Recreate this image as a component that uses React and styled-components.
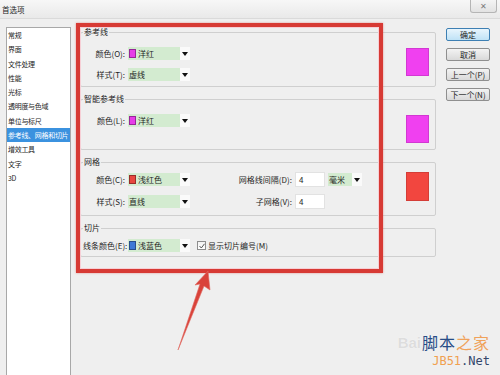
import React from "react";
import styled, { createGlobalStyle } from "styled-components";

const Global = createGlobalStyle`
  body {
    margin: 0;
    font-family: "Noto Sans CJK SC", "Liberation Sans", sans-serif;
    font-size: 8px;
    color: #1e1e1e;
  }
`;

const Window = styled.div`
  position: relative;
  width: 500px;
  height: 375px;
  overflow: hidden;
  background: #efefef;
`;

const TitleBar = styled.div`
  height: 18px;
  display: flex;
  align-items: center;
  padding-left: 2px;
  background: linear-gradient(#f7f7f7, #e9e9e9);
  border-bottom: 1px solid #dadada;
  font-size: 7.5px;
`;

const CloseBtn = styled.div`
  margin-left: auto;
  margin-right: 3px;
  align-self: flex-start;
  width: 25px;
  height: 12px;
  border: 1px solid #b5b5b5;
  border-top: none;
  border-radius: 0 0 3px 3px;
  background: linear-gradient(#f4f4f4, #e2e2e2);
  display: flex;
  align-items: center;
  justify-content: center;
  color: #7a7a7a;
  font-size: 8px;
  line-height: 1;
`;

const Body = styled.div`
  display: flex;
  height: 356px;
  padding: 7px 0 0 6px;
`;

const NavList = styled.ul`
  list-style: none;
  margin: 1px 9px 0 0;
  padding: 0;
  width: 63px;
  background: #fff;
  border: 1px solid #a8a8a8;
  border-bottom: none;
`;

const NavItem = styled.li`
  height: 14.3px;
  line-height: 14.3px;
  padding-left: 1px;
  font-size: 7px;
  letter-spacing: -0.3px;
  white-space: nowrap;
  overflow: hidden;
  background: ${(p) => (p.$active ? "#3b92df" : "transparent")};
  color: ${(p) => (p.$active ? "#fff" : "#1e1e1e")};
`;

const Main = styled.div`
  width: 356px;
  display: flex;
  flex-direction: column;
  gap: 6px;
`;

const Group = styled.fieldset`
  margin: 0;
  padding: ${(p) => p.$pt}px 6px ${(p) => p.$pb}px 2px;
  border: 1px solid #cfcfcf;
  border-radius: 2px;
  min-width: 0;
`;

const Legend = styled.legend`
  padding: 0 1px;
  margin: 0;
  line-height: 12px;
  font-size: 8px;
`;

const GroupRow = styled.div`
  display: flex;
  align-items: flex-start;
`;

const Fields = styled.div`
  display: grid;
  grid-template-columns: ${(p) => p.$cols};
  column-gap: 3px;
  row-gap: ${(p) => p.$gap}px;
  align-items: center;
`;

const Label = styled.span`
  text-align: right;
  white-space: nowrap;
  line-height: 13px;
`;

const ComboBox = styled.div`
  display: flex;
  height: 13px;
`;

const ComboField = styled.div`
  flex: 1;
  display: flex;
  align-items: center;
  gap: 2px;
  padding-left: 1px;
  background: #d3ebd0;
  white-space: nowrap;
`;

const ComboArrow = styled.div`
  width: 10px;
  background: #fafafa;
  display: flex;
  align-items: center;
  justify-content: center;
`;

const Chip = styled.span`
  width: 7px;
  height: 9px;
  background: ${(p) => p.$color};
  border: 1px solid rgba(0, 0, 0, 0.35);
  box-sizing: border-box;
`;

const NumInput = styled.div`
  height: 15px;
  background: #fff;
  border: 1px solid #e2e2e2;
  box-sizing: border-box;
  padding-left: 3px;
  line-height: 13px;
`;

const Swatch = styled.div`
  margin-left: auto;
  margin-top: ${(p) => p.$mt}px;
  width: 23px;
  height: ${(p) => p.$h}px;
  background: ${(p) => p.$color};
  border: 1px solid rgba(0, 0, 0, 0.12);
  box-sizing: border-box;
`;

const Check = styled.label`
  display: flex;
  align-items: center;
  gap: 2px;
  margin-left: 4px;
  white-space: nowrap;
`;

const CheckBox = styled.span`
  width: 7px;
  height: 7px;
  border: 1px solid #8d8d8d;
  background: linear-gradient(#f2f2f2, #fff);
  display: flex;
  align-items: center;
  justify-content: center;
`;

const Buttons = styled.div`
  width: 44px;
  margin: 2px 0 0 10px;
  display: flex;
  flex-direction: column;
  gap: 7px;
`;

const Button = styled.div`
  height: 13px;
  box-sizing: border-box;
  border: 1px solid ${(p) => (p.$primary ? "#3d7fb3" : "#8f8f8f")};
  border-radius: 2px;
  background: ${(p) =>
    p.$primary
      ? "linear-gradient(#e8f5fd, #bfe2f6)"
      : "linear-gradient(#f3f3f3, #d9d9d9)"};
  display: flex;
  align-items: center;
  justify-content: center;
  line-height: 1;
`;

const Highlight = styled.div`
  position: absolute;
  left: 76px;
  top: 23px;
  width: 307px;
  height: 250px;
  box-sizing: border-box;
  border: 4px solid #d73a34;
  box-shadow: 0 0 2px rgba(215, 58, 52, 0.5), inset 0 0 0 1px #f6cfd6;
  pointer-events: none;
`;

const Overlay = styled.svg`
  position: absolute;
  left: 0;
  top: 0;
  pointer-events: none;
`;

const Watermark = styled.div`
  position: absolute;
  right: 10px;
  bottom: 8px;
  display: flex;
  align-items: flex-start;
  gap: 1px;
`;

const Bai = styled.div`
  font-family: "Liberation Sans", sans-serif;
  font-size: 15px;
  line-height: 17px;
  font-weight: bold;
  color: #dddddd;
  text-shadow: 0 0 1px #fff;
`;

const Brand = styled.div`
  display: flex;
  flex-direction: column;
  align-items: flex-end;
  gap: 4px;
`;

const BrandCn = styled.div`
  font-size: 16px;
  line-height: 17px;
  letter-spacing: 1px;
`;

const BrandEn = styled.div`
  font-family: "DejaVu Sans Mono", monospace;
  font-size: 12px;
  line-height: 12px;
`;

const Tint = styled.span`
  color: ${(p) => p.$c};
`;

const Arrow = () => (
  <svg width="6" height="4" viewBox="0 0 6 4">
    <path d="M0 0h6L3 4z" fill="#111" />
  </svg>
);

function Combo({ width, chip, text }) {
  return (
    <ComboBox style={{ width }}>
      <ComboField>
        {chip && <Chip $color={chip} />}
        {text}
      </ComboField>
      <ComboArrow>
        <Arrow />
      </ComboArrow>
    </ComboBox>
  );
}

const navItems = [
  "常规",
  "界面",
  "文件处理",
  "性能",
  "光标",
  "透明度与色域",
  "单位与标尺",
  "参考线、网格和切片",
  "增效工具",
  "文字",
  "3D",
];

export default function App() {
  return (
    <Window>
      <Global />
      <TitleBar>
        首选项
        <CloseBtn>✕</CloseBtn>
      </TitleBar>
      <Body>
        <NavList>
          {navItems.map((n, i) => (
            <NavItem key={n} $active={i === 7}>
              {n}
            </NavItem>
          ))}
        </NavList>

        <Main>
          <Group $pt={9} $pb={5}>
            <Legend>参考线</Legend>
            <GroupRow>
              <Fields $cols="42px 62px" $gap={8}>
                <Label>颜色(O):</Label>
                <Combo width={62} chip="#e63de8" text="洋红" />
                <Label>样式(T):</Label>
                <Combo width={62} text="虚线" />
              </Fields>
              <Swatch $color="#f040f0" $h={28} $mt={1} />
            </GroupRow>
          </Group>

          <Group $pt={9} $pb={6}>
            <Legend>智能参考线</Legend>
            <GroupRow>
              <Fields $cols="42px 62px" $gap={8}>
                <Label>颜色(L):</Label>
                <Combo width={62} chip="#e63de8" text="洋红" />
              </Fields>
              <Swatch $color="#f040f0" $h={28} $mt={1} />
            </GroupRow>
          </Group>

          <Group $pt={4} $pb={6}>
            <Legend>网格</Legend>
            <GroupRow>
              <Fields $cols="42px 62px 99px 30px 34px" $gap={7}>
                <Label>颜色(C):</Label>
                <Combo width={62} chip="#e8463f" text="浅红色" />
                <Label>网格线间隔(D):</Label>
                <NumInput>4</NumInput>
                <Combo width={34} text="毫米" />
                <Label>样式(S):</Label>
                <Combo width={62} text="直线" />
                <Label>子网格(V):</Label>
                <NumInput>4</NumInput>
                <span />
              </Fields>
              <Swatch $color="#f2463f" $h={29} $mt={0} />
            </GroupRow>
          </Group>

          <Group $pt={5} $pb={4}>
            <Legend>切片</Legend>
            <GroupRow>
              <Fields $cols="42px 62px auto" $gap={0}>
                <Label>线条颜色(E):</Label>
                <Combo width={62} chip="#3e78d6" text="浅蓝色" />
                <Check>
                  <CheckBox>
                    <svg width="6" height="6" viewBox="0 0 6 6">
                      <path d="M0.5 3l1.8 2L5.5 0.8" stroke="#555" strokeWidth="1" fill="none" />
                    </svg>
                  </CheckBox>
                  显示切片编号(M)
                </Check>
              </Fields>
            </GroupRow>
          </Group>
        </Main>

        <Buttons>
          <Button $primary>确定</Button>
          <Button>取消</Button>
          <Button>上一个(P)</Button>
          <Button>下一个(N)</Button>
        </Buttons>
      </Body>

      <Highlight />
      <Overlay width="500" height="375">
        <polygon
          points="208,271 210,290 204,286 178,350 200,284 195,285"
          fill="#d9423a"
          stroke="#e06a62"
          strokeWidth="0.6"
        />
      </Overlay>

      <Watermark>
        <Bai>Bai</Bai>
        <Brand>
          <BrandCn>
            <Tint $c="#274c86">脚本</Tint>
            <Tint $c="#f0a25a">之家</Tint>
          </BrandCn>
          <BrandEn>
            <Tint $c="#f0a050">JB51</Tint>
            <Tint $c="#34466a">.Net</Tint>
          </BrandEn>
        </Brand>
      </Watermark>
    </Window>
  );
}
